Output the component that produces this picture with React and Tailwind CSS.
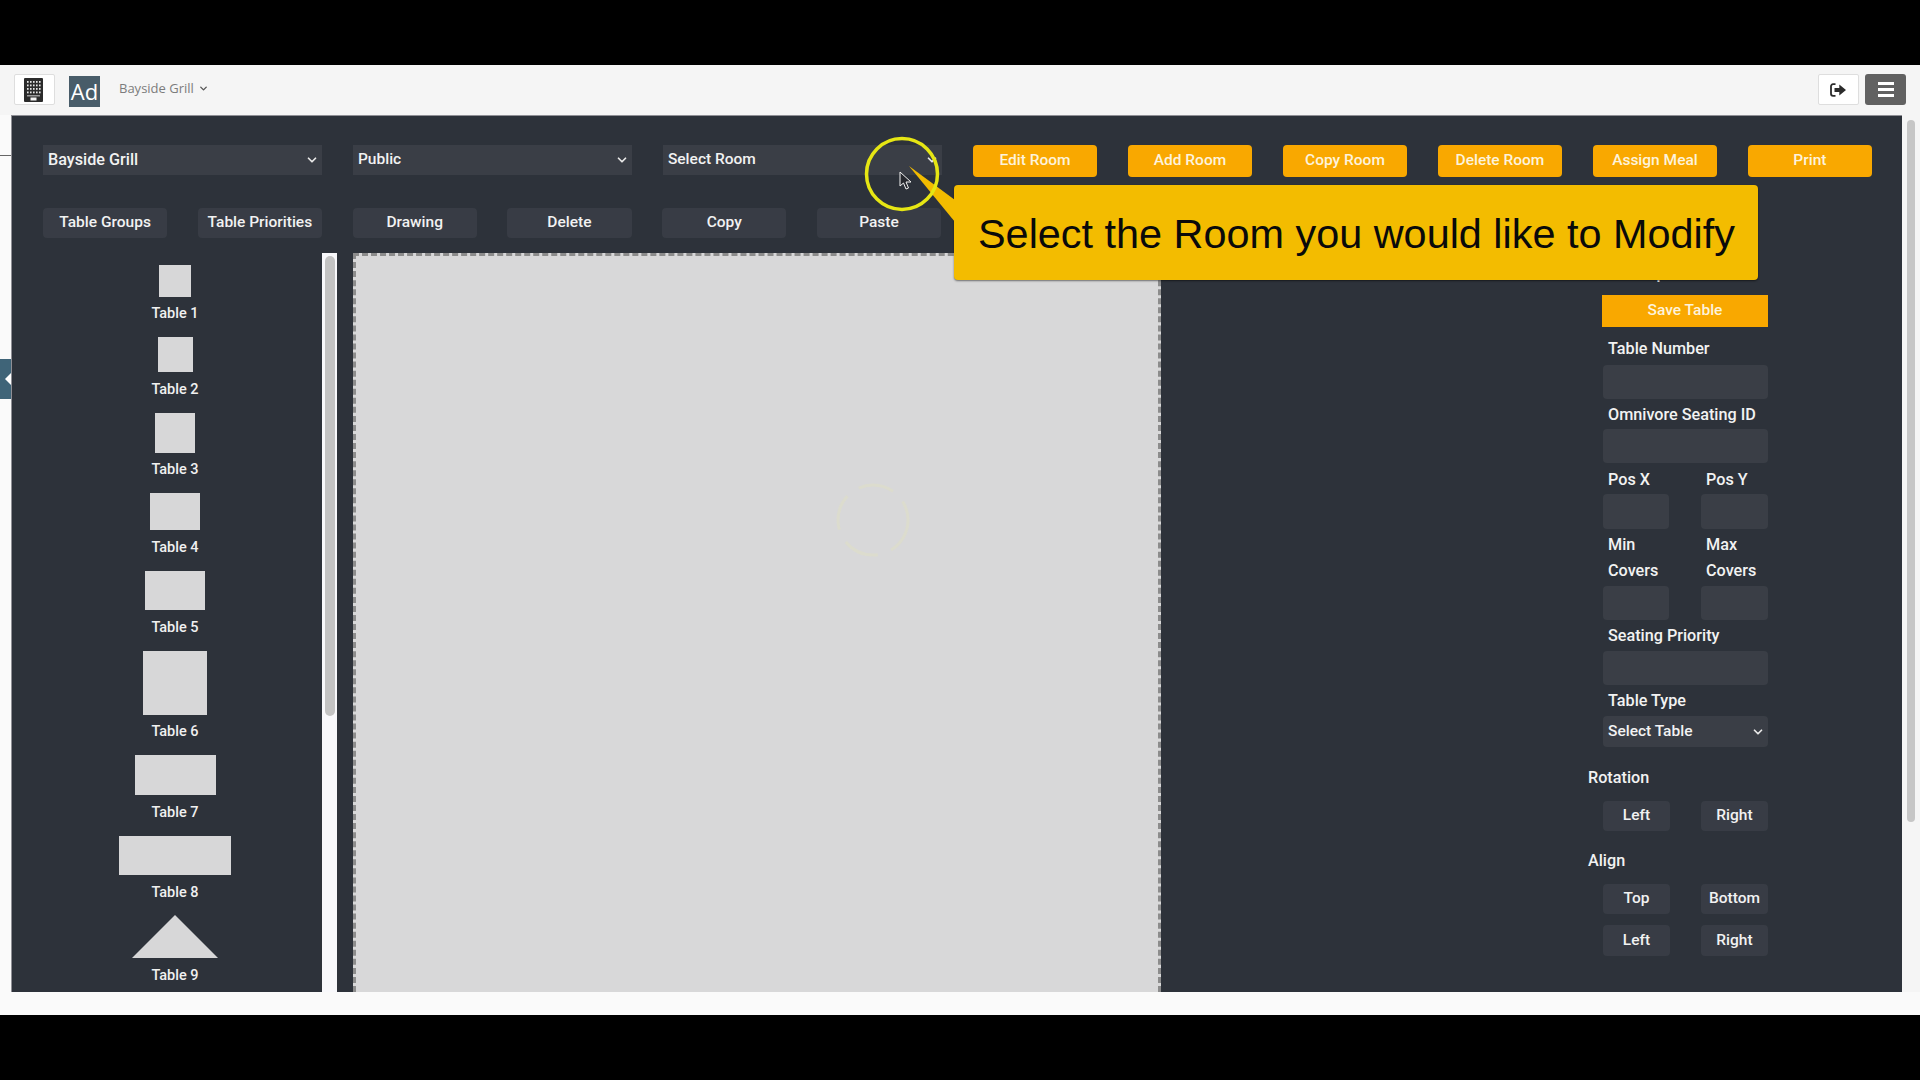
import React from "react";
import { ChevronDown } from "lucide-react";

const tables = [
  { n: "Table 1", rect: "mt-[12px] w-[32px] h-[32px]", label: "mt-[7px]" },
  { n: "Table 2", rect: "mt-[13px] w-[35px] h-[35px]", label: "mt-[8px]" },
  { n: "Table 3", rect: "mt-[13px] w-[40px] h-[40px]", label: "mt-[7px]" },
  { n: "Table 4", rect: "mt-[13px] w-[50px] h-[37px]", label: "mt-[8px]" },
  { n: "Table 5", rect: "mt-[13px] w-[60px] h-[39px]", label: "mt-[8px]" },
  { n: "Table 6", rect: "mt-[13px] w-[64px] h-[64px]", label: "mt-[7px]" },
  { n: "Table 7", rect: "mt-[13px] w-[81px] h-[40px]", label: "mt-[8px]" },
  { n: "Table 8", rect: "mt-[13px] w-[112px] h-[39px]", label: "mt-[8px]" },
];

const Sel = ({ label, className }) => (
  <div className={`flex items-center justify-between bg-[#3a3e46] text-[#f2f2f2] pl-[5px] pr-[3px] font-medium ${className}`}>
    <span>{label}</span>
    <ChevronDown size={14} strokeWidth={3} className="text-[#e8e8e8]" />
  </div>
);

const DarkBtn = ({ label, className = "" }) => (
  <div className={`flex items-center justify-center rounded-[4px] bg-[#383c45] text-[#f2f2f2] font-medium ${className}`}>{label}</div>
);

const OrangeBtn = ({ label }) => (
  <div className="flex items-center justify-center h-[32px] rounded-[4px] bg-[#f9a800] text-[#fdf3dc] font-medium">{label}</div>
);

const Input = ({ className }) => <div className={`rounded-[4px] bg-[#3a3e46] ${className}`} />;

const Label = ({ children, className = "" }) => (
  <div className={`pl-[5px] leading-[26px] text-[16.2px] text-[#f2f2f2] font-medium ${className}`}>{children}</div>
);

export default function App() {
  return (
    <div className="relative w-[1920px] h-[1080px] bg-black overflow-hidden font-['Roboto',sans-serif] text-[15.5px]">
      <div className="h-[65px]" />
      <div className="h-[950px] bg-[#fafafa] flex flex-col">
        {/* header */}
        <div className="h-[50px] flex items-start bg-[#f5f5f5] shrink-0">
          <div className="ml-[14px] mt-[9px] w-[41px] h-[31px] bg-white border border-[#dedede] rounded-[2px] flex items-center justify-center">
            <svg width="19" height="24" viewBox="0 0 19 24" className="-ml-[2px]">
              <rect width="19" height="24" rx="1" fill="#2b2b2b" />
              {[3, 6.5, 10, 13.5].map((y) =>
                [3, 6, 9, 12, 15].map((x) => <rect key={`${x}-${y}`} x={x} y={y} width="1.6" height="1.8" fill="#e6e6e6" />)
              )}
              <rect x="3" y="17" width="13" height="1.5" fill="#9a9a9a" />
              <rect x="6.5" y="19.5" width="6" height="3" fill="#f5f5f5" />
            </svg>
          </div>
          <div className="ml-[14px] mt-[11px] w-[31px] h-[31px] bg-[#485c69] flex items-center justify-center text-white text-[22px] font-['Open_Sans',sans-serif]">Ad</div>
          <div className="ml-[19px] mt-[14px] flex items-center gap-[4px] text-[#7c7c7c] text-[13px] font-['Open_Sans',sans-serif]">
            <span>Bayside Grill</span>
            <ChevronDown size={11} strokeWidth={3} className="text-[#555]" />
          </div>
          <div className="ml-auto mt-[9px] w-[41px] h-[31px] bg-white border border-[#dedede] rounded-[2px] flex items-center justify-center">
            <svg width="16" height="14" viewBox="0 0 16 14" className="-ml-[2px]">
              <path d="M5.5 1.2H3A2 2 0 0 0 1 3.2v7.6a2 2 0 0 0 2 2h2.5" fill="none" stroke="#2b2b2b" strokeWidth="1.8" />
              <path d="M4.5 5h4.8V1.6L16 7l-6.7 5.4V9H4.5z" fill="#2b2b2b" />
            </svg>
          </div>
          <div className="ml-[6px] mr-[14px] mt-[9px] w-[41px] h-[31px] bg-[#616161] rounded-[3px] flex flex-col items-center justify-center gap-[3.5px]">
            <div className="w-[16px] h-[2.5px] bg-white" />
            <div className="w-[16px] h-[2.5px] bg-white" />
            <div className="w-[16px] h-[2.5px] bg-white" />
          </div>
        </div>

        <div className="flex flex-1 min-h-0 items-start">
          {/* left gutter */}
          <div className="relative w-[11px] h-[877px] shrink-0">
            <div className="mt-[40px] h-px bg-[#666]" />
            <div className="mt-[203px] h-[40px] bg-[#3f6478] flex items-center justify-end">
              <div className="w-0 h-0 border-y-[6px] border-y-transparent border-r-[6px] border-r-white" />
            </div>
          </div>

          {/* main dark panel */}
          <div className="w-[1891px] h-[877px] shrink-0 bg-[#2d323a] border-t-[1.5px] border-l-[1.5px] border-[#8f8f95] pl-[31px] pt-[29px] flex flex-col overflow-hidden">
            <div className="w-[1829px] grid grid-cols-[repeat(12,124.2px)] gap-x-[30.8px]">
              <Sel label={<span className="text-[16.2px]">Bayside Grill</span>} className="col-span-2 h-[30px]" />
              <Sel label="Public" className="col-span-2 h-[30px]" />
              <Sel label="Select Room" className="col-span-2 h-[30px]" />
              <OrangeBtn label="Edit Room" />
              <OrangeBtn label="Add Room" />
              <OrangeBtn label="Copy Room" />
              <OrangeBtn label="Delete Room" />
              <OrangeBtn label="Assign Meal" />
              <OrangeBtn label="Print" />
            </div>
            <div className="mt-[31px] w-[929px] grid grid-cols-[repeat(6,124.2px)] gap-x-[30.6px]">
              {["Table Groups", "Table Priorities", "Drawing", "Delete", "Copy", "Paste"].map((l) => (
                <DarkBtn key={l} label={l} className="h-[30px]" />
              ))}
            </div>

            <div className="mt-[15px] flex items-start h-[739px] overflow-hidden">
              {/* table list */}
              <div className="w-[264px] shrink-0 flex flex-col items-center text-[#f0f0f0] font-medium">
                {tables.map((t) => (
                  <React.Fragment key={t.n}>
                    <div className={`${t.rect} bg-[#d7d7d8]`} />
                    <div className={`${t.label} h-[20px] leading-[20px] text-[14.5px]`}>{t.n}</div>
                  </React.Fragment>
                ))}
                <svg width="86" height="43" viewBox="0 0 86 43" className="mt-[12px] shrink-0">
                  <polygon points="43,0 86,43 0,43" fill="#d7d7d8" />
                </svg>
                <div className="mt-[8px] h-[20px] leading-[20px] text-[14.5px]">Table 9</div>
              </div>

              {/* list scrollbar */}
              <div className="ml-[15px] w-[15px] h-[739px] shrink-0 bg-[#f8f8fb] pl-[3px] pr-[2px] pt-[3px]">
                <div className="w-[10px] h-[460px] rounded-[5px] bg-[#c3c3c3]" />
              </div>

              {/* canvas */}
              <div className="ml-[16px] w-[808px] h-[739px] shrink-0 bg-[#d8d8d9] border-t-[3px] border-l-[3px] border-r-[3px] border-dashed border-[#8c8c8c]" />

              {/* properties */}
              <div className="ml-[427px] w-[180px] shrink-0 flex flex-col">
                <div className="mt-[8px] h-[26px] leading-[26px] text-[16.2px] text-[#f2f2f2] font-medium">Table Properties</div>
                <div className="mt-[8px] ml-[14px] w-[166px] h-[32px] bg-[#f9a800] text-[#fdf3dc] font-medium flex items-center justify-center">Save Table</div>
                <div className="ml-[15px] w-[165px] flex flex-col">
                  <Label className="mt-[9px]">Table Number</Label>
                  <Input className="mt-[3px] h-[34px]" />
                  <Label className="mt-[3px]">Omnivore Seating ID</Label>
                  <Input className="mt-[1px] h-[34px]" />
                  <div className="mt-[4px] grid grid-cols-[66px_67px] gap-x-[32px]">
                    <Label>Pos X</Label>
                    <Label>Pos Y</Label>
                    <Input className="mt-[1px] h-[35px]" />
                    <Input className="mt-[1px] h-[35px]" />
                    <Label className="mt-[3px]">Min Covers</Label>
                    <Label className="mt-[3px]">Max Covers</Label>
                    <Input className="mt-[2px] h-[34px]" />
                    <Input className="mt-[2px] h-[34px]" />
                  </div>
                  <Label className="mt-[3px]">Seating Priority</Label>
                  <Input className="mt-[2px] h-[34px]" />
                  <Label className="mt-[3px]">Table Type</Label>
                  <Sel label="Select Table" className="mt-[2px] h-[31px] rounded-[4px]" />
                </div>
                <div className="mt-[18px] h-[26px] leading-[26px] text-[16.2px] text-[#f2f2f2] font-medium">Rotation</div>
                <div className="mt-[10px] ml-[15px] grid grid-cols-[67px_67px] gap-x-[31px]">
                  <DarkBtn label="Left" className="h-[30px]" />
                  <DarkBtn label="Right" className="h-[30px]" />
                </div>
                <div className="mt-[17px] h-[26px] leading-[26px] text-[16.2px] text-[#f2f2f2] font-medium">Align</div>
                <div className="mt-[10px] ml-[15px] grid grid-cols-[67px_67px] gap-x-[31px] gap-y-[11px]">
                  <DarkBtn label="Top" className="h-[30px]" />
                  <DarkBtn label="Bottom" className="h-[30px]" />
                  <DarkBtn label="Left" className="h-[31px]" />
                  <DarkBtn label="Right" className="h-[31px]" />
                </div>
              </div>
            </div>
          </div>

          {/* page scrollbar */}
          <div className="flex-1 h-[877px] bg-[#f5f5f5] pl-[5px] pr-[5px] pt-[5px]">
            <div className="w-full h-[702px] rounded-[4px] bg-[#c6c6c6]" />
          </div>
        </div>
      </div>

      {/* faint ring left in the canvas by the video */}
      <svg width="100" height="100" viewBox="0 0 100 100" className="absolute left-[823px] top-[470px]">
        <circle cx="50" cy="50" r="35" fill="none" stroke="#dcdcce" strokeWidth="3" strokeDasharray="36 14" />
      </svg>

      {/* tutorial callout */}
      <div className="absolute left-[954px] top-[185px] w-[804px] h-[95px] rounded-[4px] bg-[#f3bc00] shadow-[0_1px_2px_rgba(0,0,0,0.5)] flex items-center pl-[24px] pt-[4px] text-[#0a0a0a] text-[41.4px] font-['Liberation_Sans',sans-serif]">
        Select the Room you would like to Modify
      </div>
      <svg width="64" height="64" viewBox="0 0 64 64" className="absolute left-[900px] top-[160px]">
        <polygon points="9,6 55,40 55,62" fill="#f3bc00" />
      </svg>
      <svg width="80" height="80" viewBox="0 0 80 80" className="absolute left-[862px] top-[134px]">
        <circle cx="40" cy="40" r="35.5" fill="none" stroke="#e6e614" strokeWidth="3.5" />
      </svg>
      <svg width="14" height="20" viewBox="0 0 14 20" className="absolute left-[899px] top-[171px]">
        <path d="M1 1v14l3.5-3 2.5 6 2.5-1-2.5-6H12z" fill="#26282e" stroke="#f2f2f2" strokeWidth="1" strokeLinejoin="round" />
      </svg>
    </div>
  );
}
